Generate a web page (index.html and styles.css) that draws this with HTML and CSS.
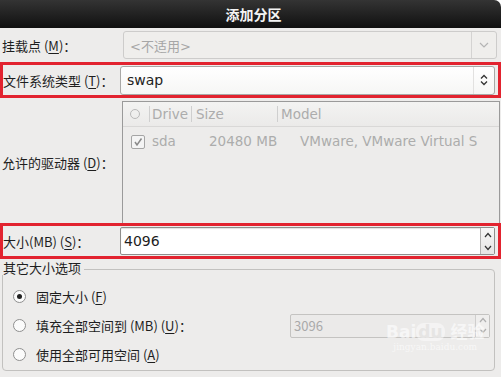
FILE: index.html
```html
<!DOCTYPE html>
<html lang="zh">
<head>
<meta charset="utf-8">
<link rel="stylesheet" href="styles.css">
</head>
<body>
<div class="win">
  <div class="titlebar">添加分区</div>
  <div class="content">
    <div class="row r1">
      <div class="label">挂载点 (<u>M</u>)：</div>
      <div class="combo disabled">
        <span class="ctext">&lt;不适用&gt;</span>
        <span class="cbtn"><svg width="10" height="6" viewBox="0 0 10 6"><path d="M1 1 L5 5 L9 1" fill="none" stroke="#b4b4b4" stroke-width="1.2"/></svg></span>
      </div>
    </div>
    <div class="row red r2">
      <div class="label">文件系统类型 (<u>T</u>)：</div>
      <div class="combo active">
        <span class="ctext">swap</span>
        <span class="cbtn"><svg width="8" height="12" viewBox="0 0 8 12"><path d="M1 4.5 L4 1.5 L7 4.5 M1 7.5 L4 10.5 L7 7.5" fill="none" stroke="#333" stroke-width="1.3"/></svg></span>
      </div>
    </div>
    <div class="row r3">
      <div class="label">允许的驱动器 (<u>D</u>)：</div>
      <div class="list">
        <div class="lhead">
          <span class="hc c0"><span class="hcirc"></span></span>
          <span class="hc c1">Drive</span>
          <span class="hc c2">Size</span>
          <span class="hc c3">Model</span>
        </div>
        <div class="lrow">
          <span class="c0"><span class="check"><svg width="10" height="10" viewBox="0 0 10 10"><path d="M2 5 L4 8 L8.5 1.5" fill="none" stroke="#8a8a8a" stroke-width="1.5"/></svg></span></span>
          <span class="c1">sda</span>
          <span class="c2">20480 MB</span>
          <span class="c3">VMware, VMware Virtual S</span>
        </div>
      </div>
    </div>
    <div class="row red r4">
      <div class="label">大小(MB) (<u>S</u>)：</div>
      <div class="spin">
        <span class="stext">4096</span>
        <span class="sbtns">
          <svg width="8" height="6" viewBox="0 0 8 6"><path d="M1 5 L4 1.5 L7 5" fill="none" stroke="#333" stroke-width="1.2"/></svg>
          <svg width="8" height="6" viewBox="0 0 8 6"><path d="M1 1 L4 4.5 L7 1" fill="none" stroke="#333" stroke-width="1.2"/></svg>
        </span>
      </div>
    </div>
    <div class="frame">
      <div class="flabel">其它大小选项</div>
      <div class="fbody">
        <div class="opt"><span class="radio on"></span><span>固定大小 (<u>F</u>)</span></div>
        <div class="opt"><span class="radio"></span><span>填充全部空间到 (MB) (<u>U</u>)：</span>
          <div class="spin dis">
            <span class="stext">3096</span>
            <span class="sbtns">
              <svg width="8" height="6" viewBox="0 0 8 6"><path d="M1 5 L4 1.5 L7 5" fill="none" stroke="#b0b0b0" stroke-width="1.2"/></svg>
              <svg width="8" height="6" viewBox="0 0 8 6"><path d="M1 1 L4 4.5 L7 1" fill="none" stroke="#b0b0b0" stroke-width="1.2"/></svg>
            </span>
          </div>
        </div>
        <div class="opt"><span class="radio"></span><span>使用全部可用空间 (<u>A</u>)</span></div>
      </div>
      <div class="wm">
        <div class="wm1">Bai<span class="du">du</span> 经验</div>
        <div class="wm2">jingyan.baidu.com</div>
      </div>
    </div>
  </div>
</div>
</body>
</html>
```

FILE: styles.css
```css
html, body {
  margin: 0;
  padding: 0;
  background: #ffffff;
}
body {
  width: 503px;
  height: 377px;
  overflow: hidden;
  font-family: "DejaVu Sans", "Noto Sans CJK SC", sans-serif;
  font-size: 13px;
  color: #1e1e1e;
}
u { text-decoration-thickness: 1px; text-underline-offset: 2px; }
.win {
  width: 501px;
  height: 377px;
  background: #edeceb;
  border-top-right-radius: 7px;
  overflow: hidden;
}
.titlebar {
  height: 28px;
  background: linear-gradient(#343434, #101010);
  color: #f4f4f4;
  font-weight: bold;
  font-size: 14px;
  display: flex;
  align-items: center;
  justify-content: center;
  padding-left: 6px;
}
.content {
  display: flex;
  flex-direction: column;
}
.row {
  display: flex;
  align-items: center;
}
.label {
  width: 120px;
  padding-left: 2px;
  flex: none;
  white-space: nowrap;
  font-family: "Noto Sans CJK SC", sans-serif;
}
.r1 { margin-top: 3px; height: 28px; }
.r1 .combo { margin-left: 1px; }
.red {
  border: 3px solid #e2232f;
  width: 495px;
}
.red .label { width: 117px; padding-left: 0; }
.r2 { margin-top: 3px; height: 30px; }
.combo {
  flex: none;
  width: 374px;
  height: 28px;
  box-sizing: border-box;
  border: 1px solid #b8b7b5;
  border-radius: 3px;
  display: flex;
  align-items: center;
}
.combo.disabled {
  background: #efeeec;
  border-color: #cdcccb;
  color: #a6a6a6;
}
.combo.active {
  height: 29px;
  width: 375px;
  background: linear-gradient(#ffffff, #f6f6f5);
  border-color: #a9a8a6;
}
.ctext { flex: 1; padding-left: 6px; }
.combo.active .ctext { font-size: 14px; color: #222; }
.cbtn {
  width: 24px;
  height: 100%;
  display: flex;
  align-items: center;
  justify-content: center;
  border-left: 1px solid #d4d3d2;
}
.combo.active .cbtn { border-left-color: #e2e1e0; width: 20px; }
.r3 { margin-top: 3px; height: 122px; }
.list {
  width: 378px;
  height: 122px;
  box-sizing: border-box;
  border: 1px solid #9a9a9a;
  border-bottom: none;
  color: #acacac;
  font-size: 13.5px;
  align-self: flex-start;
  overflow: hidden;
}
.lhead, .lrow { white-space: nowrap; }
.lhead {
  height: 24px;
  display: flex;
  align-items: center;
  background: linear-gradient(#f3f3f2, #ebeae9);
  border-bottom: 1px solid #d9d8d7;
}
.lrow {
  height: 28px;
  display: flex;
  align-items: center;
}
.lhead > span, .lrow > span { flex: none; box-sizing: border-box; }
.lhead .c0, .lrow .c0 { width: 26px; }
.lhead .c0 { padding-left: 7px; display: flex; align-items: center; }
.hcirc {
  width: 8px;
  height: 8px;
  border: 1px solid #b9b9b9;
  border-radius: 50%;
}
.lhead .c1 { width: 42px; padding-left: 2px; }
.lhead .c2 { width: 86px; padding-left: 4px; }
.lhead .c3 { padding-left: 3px; }
.hc + .hc { border-left: 1px solid #cfcfcf; }
.lrow .c0 { padding-left: 8px; }
.lrow .c1 { width: 42px; padding-left: 3px; }
.lrow .c2 { width: 86px; padding-left: 18px; }
.lrow .c3 { padding-left: 23px; }
.check {
  display: inline-flex;
  width: 12px;
  height: 12px;
  border: 1px solid #a5a5a5;
  border-radius: 2px;
  align-items: center;
  justify-content: center;
  background: #f4f4f4;
  margin-top: 2px;
}
.r4 { height: 30px; }
.spin {
  width: 375px;
  height: 28px;
  box-sizing: border-box;
  border: 1px solid #8f8e8c;
  border-radius: 2px;
  background: #ffffff;
  display: flex;
  align-items: center;
  box-shadow: inset 0 1px 1px rgba(0,0,0,0.12);
}
.stext { flex: 1; padding-left: 3px; font-size: 14px; }
.sbtns {
  width: 13px;
  height: 100%;
  display: flex;
  flex-direction: column;
  align-items: center;
  justify-content: space-around;
  border-left: 1px solid #b2b1b0;
  background: linear-gradient(#f7f7f7, #e6e5e4);
}
.frame {
  position: relative;
  padding-left: 2px;
}
.flabel {
  width: max-content;
  height: 16px;
  display: flex;
  align-items: center;
  padding: 0 3px 0 1px;
  font-family: "Noto Sans CJK SC", sans-serif;
  position: relative;
  z-index: 1;
  margin-bottom: -6px;
  background: #edeceb;
}
.fbody {
  width: 493px;
  height: 102px;
  border: 1px solid #c2c1bf;
  border-radius: 4px;
  padding-top: 15px;
  box-sizing: border-box;
  display: flex;
  flex-direction: column;
  gap: 6px;
}
.opt {
  height: 23px;
  display: flex;
  align-items: center;
  font-family: "Noto Sans CJK SC", sans-serif;
  padding-left: 10px;
  gap: 10px;
}
.radio {
  width: 11px;
  height: 11px;
  border: 1px solid #8f8f8f;
  border-radius: 50%;
  background: #fbfbfb;
  flex: none;
  display: flex;
  align-items: center;
  justify-content: center;
}
.radio.on::after {
  content: "";
  width: 5px;
  height: 5px;
  border-radius: 50%;
  background: #222;
}
.opt .spin { margin-left: auto; margin-right: 4px; }
.spin.dis {
  width: 200px;
  height: 24px;
  background: #ebeae9;
  border-color: #c4c3c1;
  box-shadow: none;
  color: #a9a9a9;
}
.spin.dis .sbtns { background: #efeeed; border-left-color: #cfcecd; }
.spin.dis .stext { font-size: 13px; }
.wm {
  position: absolute;
  left: 386px;
  top: 64px;
  color: rgba(255,255,255,0.6);
  text-align: center;
  pointer-events: none;
}
.wm1 { font-size: 17px; font-weight: bold; line-height: 18px; }
.du { display: inline-block; background: rgba(255,255,255,0.45); color: #e6e5e4; border-radius: 8px; padding: 0 2px; }
.wm2 { font-size: 9px; font-family: "DejaVu Serif", serif; margin-top: 1px; }
```
